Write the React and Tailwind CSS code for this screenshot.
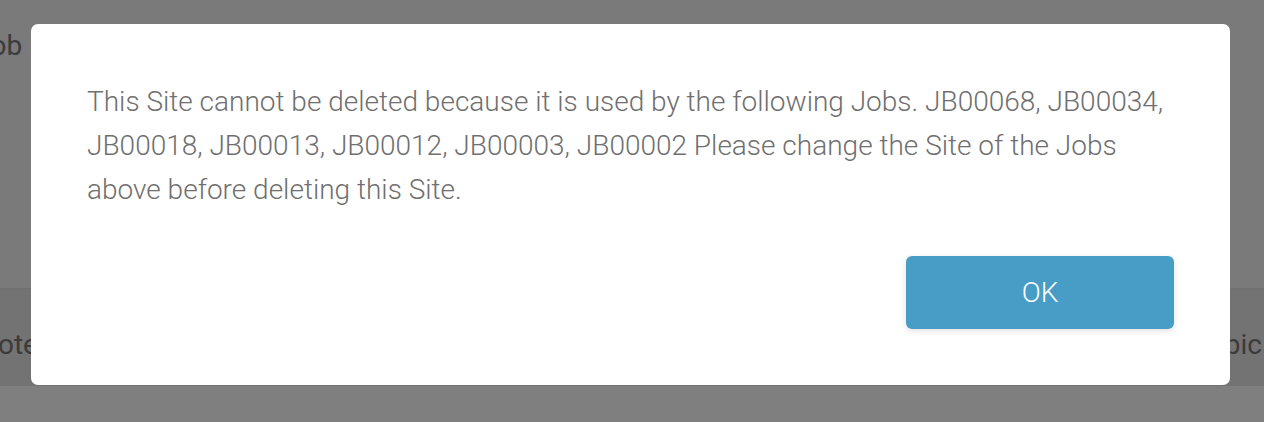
import React from 'react';

const jobs = ['JB00068', 'JB00034', 'JB00018', 'JB00013', 'JB00012', 'JB00003', 'JB00002'];

const App = () => {
  return (
    <div className="relative h-[422px] overflow-hidden bg-white" style={{ fontFamily: 'Roboto, "Noto Sans", sans-serif' }}>
      {/* page behind the dialog */}
      <div className="h-[288px] bg-[#f4f4f4] pt-[24px]">
        <div className="-ml-[25px] text-[28px] leading-[44px] text-[#777]">Job</div>
      </div>
      <div className="flex h-[98px] items-center justify-between border-t border-[#dedede] bg-[#e6e6e6] pt-[14px]">
        <span className="-ml-[22px] text-[28px] text-[#777]">Note</span>
        <span className="mr-[2px] text-[28px] text-[#777]">Topic</span>
      </div>

      {/* overlay */}
      <div className="absolute inset-0 bg-black/50 pl-[31px] pt-[24px]">
        <div className="w-[1199px] rounded-[7px] bg-white p-[56px]">
          <p className="text-[28px] font-light leading-[44px] text-[#6f6f6f]">
            This Site cannot be deleted because it is used by the following Jobs. {jobs.join(', ')} Please change the Site of the Jobs above before deleting this Site.
          </p>
          <div className="mt-[44px] flex justify-end">
            <button className="h-[73px] w-[268px] rounded-[6px] bg-[#479dc5] text-[28px] font-light text-white shadow-[0_2px_6px_rgba(0,0,0,0.12)]">
              OK
            </button>
          </div>
        </div>
      </div>
    </div>
  );
};

export default App;
